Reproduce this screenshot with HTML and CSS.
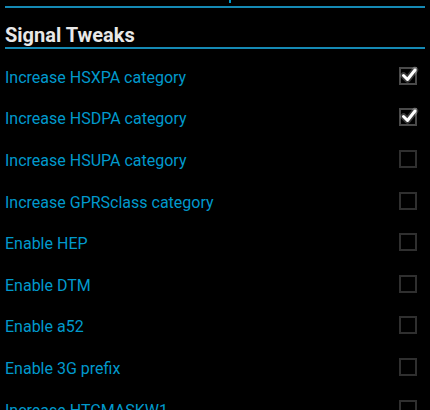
FILE: index.html
```html
<!DOCTYPE html>
<html>
<head>
<meta charset="utf-8">
<link rel="stylesheet" href="styles.css">
</head>
<body>
<div class="screen">
  <div class="prev"><span class="frag"></span></div>
  <div class="rule"></div>
  <div class="cat">Signal Tweaks</div>
  <div class="rule"></div>
  <ul class="list">
    <li class="row"><span class="title">Increase HSXPA category</span><span class="box on"><svg viewBox="0 0 18 18" width="18" height="18"><path d="M3.5 9.5 L7.5 13.5 L15 4" class="glow"/><path d="M3.5 9.5 L7.5 13.5 L15 4" class="tick"/></svg></span></li>
    <li class="row"><span class="title">Increase HSDPA category</span><span class="box on"><svg viewBox="0 0 18 18" width="18" height="18"><path d="M3.5 9.5 L7.5 13.5 L15 4" class="glow"/><path d="M3.5 9.5 L7.5 13.5 L15 4" class="tick"/></svg></span></li>
    <li class="row"><span class="title">Increase HSUPA category</span><span class="box"></span></li>
    <li class="row"><span class="title">Increase GPRSclass category</span><span class="box"></span></li>
    <li class="row"><span class="title">Enable HEP</span><span class="box"></span></li>
    <li class="row"><span class="title">Enable DTM</span><span class="box"></span></li>
    <li class="row"><span class="title">Enable a52</span><span class="box"></span></li>
    <li class="row"><span class="title">Enable 3G prefix</span><span class="box"></span></li>
    <li class="row"><span class="title">Increase HTCMASKW1</span><span class="box"></span></li>
  </ul>
</div>
</body>
</html>
```
FILE: styles.css
```css
html, body {
  margin: 0;
  padding: 0;
  background: #000;
  overflow: hidden;
}
.screen {
  width: 430px;
  height: 410px;
  overflow: hidden;
  font-family: Roboto, "Liberation Sans", sans-serif;
}
.prev {
  height: 6px;
  position: relative;
}
.frag {
  position: absolute;
  left: 229px;
  top: 0;
  width: 2px;
  height: 3px;
  background: #0099cc;
}
.rule {
  height: 2px;
  margin: 0 5px 0 5px;
  background: #1589b4;
}
.cat {
  height: 39px;
  box-sizing: border-box;
  padding: 16px 0 0 5px;
  color: #e8e8e8;
  font-weight: bold;
  font-size: 20px;
  line-height: 23px;
}
.list {
  list-style: none;
  margin: 0;
  padding: 6px 0 0 0;
}
.row {
  height: 41.6px;
  display: flex;
  align-items: center;
  justify-content: space-between;
  padding: 0 13px 0 5px;
}
.title {
  color: #0099cc;
  font-size: 16px;
  padding-top: 3px;
}
.box {
  width: 18px;
  height: 18px;
  box-sizing: border-box;
  border: 2px solid #2f2f2f;
  position: relative;
}
.box.on {
  border-color: #4a4a4a;
}
.box svg {
  position: absolute;
  left: -1px;
  top: -3px;
  overflow: visible;
}
.tick {
  fill: none;
  stroke: #fff;
  stroke-width: 3;
  stroke-linecap: round;
  stroke-linejoin: round;
}
.glow {
  fill: none;
  stroke: rgba(255,255,255,0.22);
  stroke-width: 6.5;
  stroke-linecap: round;
  stroke-linejoin: round;
}
```
